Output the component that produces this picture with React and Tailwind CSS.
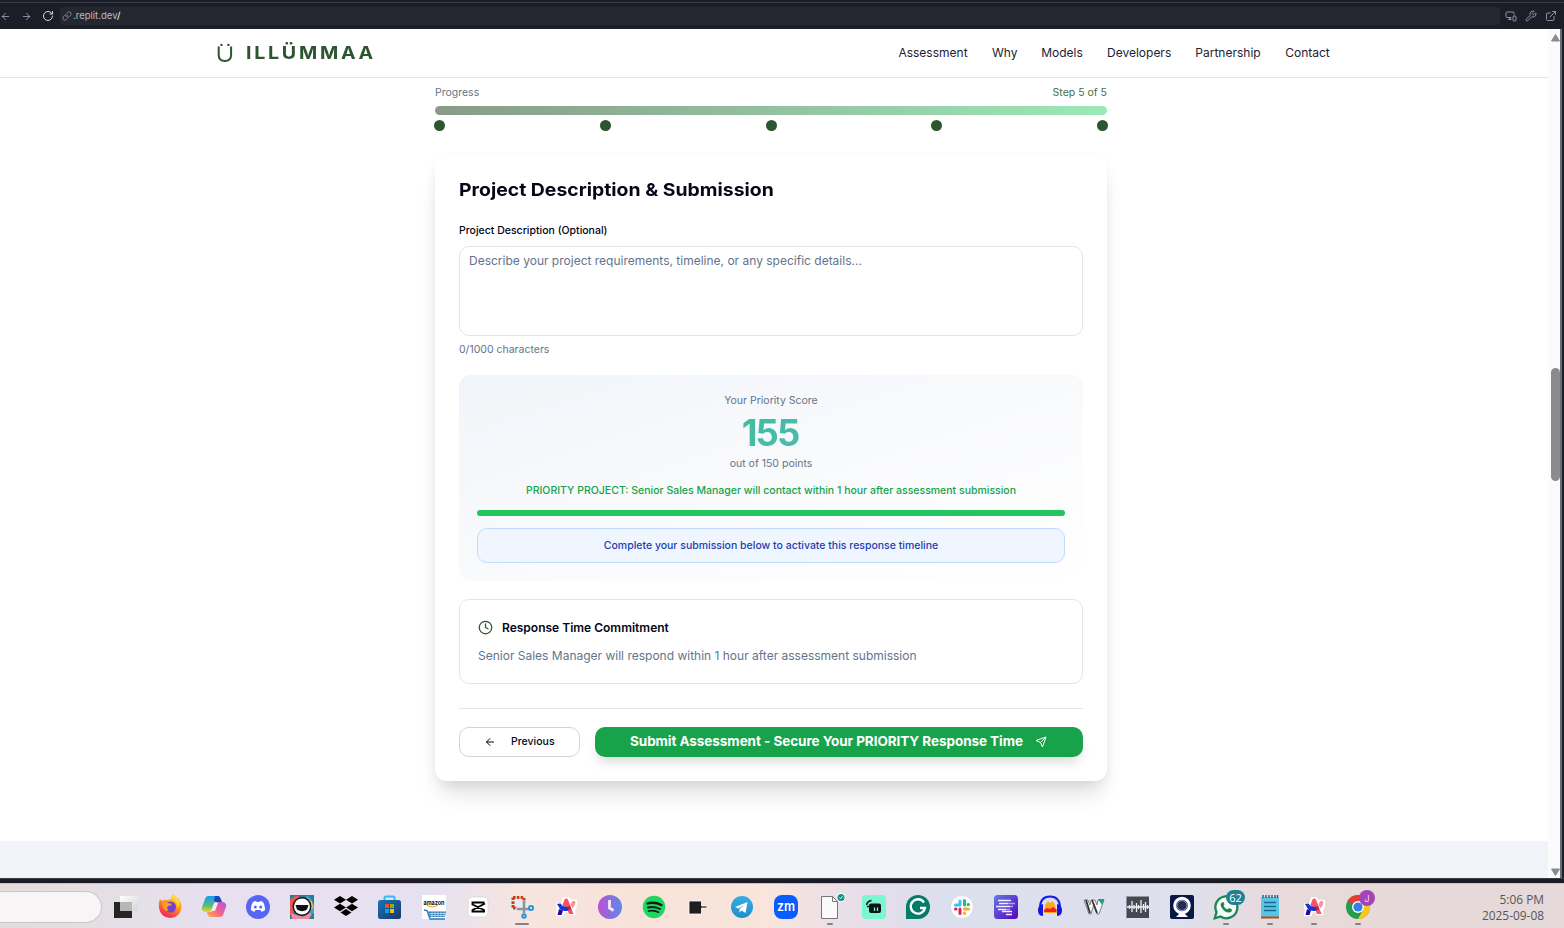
import React from "react";
import { ArrowLeft, ArrowRight, RotateCw, Link, MonitorSmartphone, Wrench, ExternalLink, Clock } from "lucide-react";

const NAV = [
  ["Assessment", "w-[70px]"],
  ["Why", "w-[25px]"],
  ["Models", "w-[42px]"],
  ["Developers", "w-[64px]"],
  ["Partnership", "w-[66px]"],
  ["Contact", "w-[45px]"],
];

function BrowserBar() {
  return (
    <div className="flex h-[29px] flex-col bg-[#1b1d27] pt-[2px]">
      <div className="h-px shrink-0 bg-[#393b49]" />
      <div className="flex h-[26px] items-center pr-[7px] text-[#a4a6b0]">
        <ArrowLeft size={11} strokeWidth={1.8} className="shrink-0" />
        <ArrowRight size={11} strokeWidth={1.8} className="ml-[10px] shrink-0" />
        <RotateCw size={12} strokeWidth={2} className="ml-[10px] shrink-0 text-[#d5d6dc]" />
        <div className="ml-[6px] flex h-[18px] flex-1 items-center rounded-[3px] bg-[#242730] pl-[2px]">
          <Link size={10} strokeWidth={1.7} />
          <span className="ml-[1px] text-[9.5px] leading-none text-[#b9bac2]">
            .replit.dev<span className="text-white">/</span>
          </span>
        </div>
        <div className="ml-[5px] flex items-center gap-[8px] text-[#9698a2]">
          <MonitorSmartphone size={12} strokeWidth={1.9} />
          <Wrench size={12} strokeWidth={1.9} />
          <ExternalLink size={12} strokeWidth={1.9} />
        </div>
      </div>
    </div>
  );
}

function Header() {
  return (
    <header className="flex h-[49px] items-center border-b border-[#e2e4ef] pl-[217px] pr-[218px]">
      <div className="flex items-center text-[#2d5530]">
        <svg width="16" height="20" viewBox="0 0 16 20" fill="none" stroke="currentColor" strokeWidth="2">
          <path d="M1.700 3.600v8.200c0 4 2.600 6.200 6.200 6.200s6.200-2.200 6.200-6.200V3.600" />
          <circle cx="4.500" cy="1.900" r="1.200" fill="currentColor" stroke="none" />
          <circle cx="11.400" cy="1.900" r="1.200" fill="currentColor" stroke="none" />
        </svg>
        <span className="ml-[13px] inline-block origin-left scale-x-[1.090] whitespace-nowrap text-[18px] font-bold leading-none tracking-[2.500px]">ILLÜMMAA</span>
      </div>
      <nav className="ml-auto flex gap-[24px] text-[12px] text-[#1d2136]">
        {NAV.map(([label, width]) => (
          <a key={label} className={width + " whitespace-nowrap text-center"}>{label}</a>
        ))}
      </nav>
    </header>
  );
}

function Progress() {
  return (
    <div className="pt-[7px]">
      <div className="flex h-[15px] items-center justify-between text-[10.5px]">
        <span className="text-[#64748b]">Progress</span>
        <span className="text-[#4b6b4d]">Step 5 of 5</span>
      </div>
      <div className="mt-[6px] h-[9px] rounded-full bg-linear-to-r from-[#889b88] to-[#9be9b8]" />
      <div className="-mx-px mt-[5px] flex justify-between">
        {[1, 2, 3, 4, 5].map((n) => (
          <div key={n} className="size-[11px] rounded-full bg-[#2d5530]" />
        ))}
      </div>
    </div>
  );
}

function ScorePanel() {
  return (
    <section className="mt-[18px] flex h-[206px] flex-col items-center rounded-[12px] bg-linear-to-br from-[#f1f5f9] via-[#f9fafc] to-white px-[18px] text-[10.5px]">
      <div className="mt-[18px] h-[15px] leading-[15px] text-[#64748b]">Your Priority Score</div>
      <div className="mt-[6px] h-[36px] bg-linear-to-br from-[#3fbd98] to-[#4dbab4] bg-clip-text pr-[2px] text-[36.5px] font-bold leading-[38px] tracking-[-1.900px] text-transparent">155</div>
      <div className="mt-[6px] h-[15px] leading-[15px] text-[#64748b]">out of 150 points</div>
      <div className="mt-[12px] h-[15px] whitespace-nowrap font-medium leading-[15px] text-[#16a34a]">
        PRIORITY PROJECT: Senior Sales Manager will contact within 1 hour after assessment submission
      </div>
      <div className="mt-[12px] h-[6px] w-full rounded-full bg-[#22c55e]" />
      <div className="mt-[12px] flex h-[35px] w-full items-center justify-center rounded-[10px] border border-[#bfdbfe] bg-[#eff6ff] font-medium text-[#1e40af]">
        Complete your submission below to activate this response timeline
      </div>
    </section>
  );
}

function FormCard() {
  return (
    <main className="mt-[25px] flex h-[625px] flex-col rounded-[12px] bg-white px-[24px] shadow-[0_18px_22px_-6px_rgba(0,0,0,0.13),0_4px_12px_0px_rgba(0,0,0,0.055)]">
      <h1 className="mt-[22px] h-[24px] origin-left scale-x-[1.078] self-start whitespace-nowrap text-[18px] font-bold leading-[24px] text-[#020617]">Project Description &amp; Submission</h1>
      <label className="mt-[21px] text-[10.5px] font-medium leading-[15px] text-[#020617]">Project Description (Optional)</label>
      <div className="mt-[8px] h-[90px] rounded-[10px] border border-[#e2e5ef] px-[9px] pt-[5px] text-[12px] leading-[18px] text-[#64748b]">
        Describe your project requirements, timeline, or any specific details...
      </div>
      <div className="mt-[6px] h-[15px] text-[10.5px] leading-[15px] text-[#64748b]">0/1000 characters</div>
      <ScorePanel />
      <section className="mt-[18px] h-[85px] rounded-[10px] border border-[#e2e5ef] px-[18px] pt-[18px]">
        <div className="flex h-[19px] items-center text-[12px] font-semibold text-[#020617]">
          <Clock size={15} strokeWidth={2} className="mr-[9px] text-[#2d5530]" />
          Response Time Commitment
        </div>
        <p className="mt-[10px] text-[12px] leading-[18px] text-[#64748b]">Senior Sales Manager will respond within 1 hour after assessment submission</p>
      </section>
      <div className="mt-[24px] flex gap-[15px] border-t border-[#e1e7ee] pt-[18px]">
        <button className="flex h-[30px] w-[121px] items-center rounded-[10px] border border-[#d1d5db] pl-[24px] text-[10.5px] font-medium text-[#020617]">
          <ArrowLeft size={12} strokeWidth={2} className="mr-[15px]" />
          Previous
        </button>
        <button className="flex h-[30px] flex-1 items-center whitespace-nowrap rounded-[10px] bg-[#17a34a] pl-[35px] text-[13.5px] font-bold text-white shadow-[0_8px_12px_-3px_rgba(0,0,0,0.14)]">
          <span className="w-[393px] pb-[2px] text-left tracking-[-0.055px]">Submit Assessment - Secure Your PRIORITY Response Time</span>
          <svg className="ml-[12px]" width="12" height="12" viewBox="0 0 24 24" fill="none" stroke="currentColor" strokeWidth="2" strokeLinejoin="round">
            <path d="m22 2-7 20-4-9-9-4Z M22 2 11 13" />
          </svg>
        </button>
      </div>
    </main>
  );
}

function ScrollTrack() {
  return (
    <div className="flex w-[16px] shrink-0 border-r-[2px] border-[#1b1d27] bg-[#fbfbfb]">
      <div className="flex flex-1 flex-col items-end">
        <svg className="mt-[5px]" width="9" height="8" viewBox="0 0 9 8"><path d="M4.500 .5 8.500 7H.5Z" fill="#8b8b8b" stroke="#8b8b8b" strokeLinejoin="round" /></svg>
        <div className="mt-[326px] h-[113px] w-[9px] rounded-full bg-[#8b8b8b]" />
        <svg className="mb-[2px] mt-auto" width="9" height="8" viewBox="0 0 9 8"><path d="M4.500 7.500 8.500 1H.5Z" fill="#8b8b8b" stroke="#8b8b8b" strokeLinejoin="round" /></svg>
      </div>
      <div className="w-[2px] bg-[#696b75]" />
    </div>
  );
}

function ArcMark() {
  return (
    <g strokeLinejoin="round">
      <path d="M13 21.500h5l2-6h4.500l2 4 1-1.500h4.500l-.5 6-2 3 1 4h-5l-1-3h-4.500l-1.500 4h-5.500l1-5Z" fill="#fff" stroke="#fff" strokeWidth="2.500" />
      <path d="m18.500 22 2-5.500q1.500-2 3.500 0L29.500 31h-4.500l-2-5-3 1Z" fill="#fb5265" />
      <path d="M26.500 21.500 28 18.500q2-1.500 3.500.5 0 3.500-3 6.500Z" fill="#ff8f98" />
      <path d="m13 21 3.500-.5 2.500 3 4.500.5 1 3.500q-5 1.500-8.500-1.500Z" fill="#0a36dc" />
      <path d="m15 26 4 1.500-1.500 4.500h-4Z" fill="#250a9c" />
      <path d="m23 23.500 3-.5 1 3.500-2.500 1Z" fill="#b8244f" />
    </g>
  );
}

const ICONS = [
  <g>
    <defs>
      <linearGradient id="tv" x1="0" y1="0" x2="1" y2="1"><stop stopColor="#fff" /><stop offset="1" stopColor="#d5d5d5" /></linearGradient>
    </defs>
    <path d="M10 19h18v16H10z" fill="#252523" />
    <path d="M16 13h17.500v15H16z" fill="url(#tv)" />
    <path d="M16 19h12v9H16z" fill="#b7b7b7" />
  </g>,
  <g>
    <defs>
      <linearGradient id="ff" x1=".8" y1="0" x2=".3" y2="1"><stop stopColor="#ffe83c" /><stop offset=".5" stopColor="#ff8a22" /><stop offset="1" stopColor="#f1185c" /></linearGradient>
    </defs>
    <path d="M12 16l2 2q2-2 5-1l4-1q0-4 3-5 1 3 4 4 4 4 3.500 9.500A11.300 11.300 0 0 1 11 25q-1-5 1-9Z" fill="url(#ff)" />
    <circle cx="22.500" cy="24" r="5.500" fill="#7141cf" />
    <path d="M14 20q3-3 6 0l4 1q-1 2-4 2-2 3 1 5-6 1-7-8Z" fill="#ff9b27" />
    <path d="M23 15q7 3 6 10 4-3 1-9l-4-4Z" fill="#ffd936" />
  </g>,
  <g>
    <defs>
      <linearGradient id="cp1" x1="0" y1="0" x2="0" y2="1"><stop stopColor="#139df0" /><stop offset=".6" stopColor="#56bd80" /><stop offset="1" stopColor="#f6d21e" /></linearGradient>
      <linearGradient id="cp2" x1="1" y1="0" x2="0" y2="1"><stop stopColor="#a85ae9" /><stop offset=".5" stopColor="#f2608d" /><stop offset="1" stopColor="#ffaf49" /></linearGradient>
    </defs>
    <path d="M16 13h10q2 0 3 4l1 2h-7l-3 8q-1 2-3 2h-4q-4-1-3-5l3-8q1-3 3-3Z" fill="url(#cp1)" />
    <path d="M23 13h3q2 0 3 4l1 2h-6l-2-1Z" fill="#1846b8" />
    <path d="M28 34H18q-2 0-3-5h4q2 0 3-3l2-6q1-1 3-1h4q4 1 3 5l-3 8q-1 2-3 2Z" fill="url(#cp2)" />
    <path d="M22 20h4l-3 8h-4Z" fill="#fae9ee" />
  </g>,
  <g>
    <circle cx="22" cy="24" r="12" fill="#5865f2" />
    <path d="M17 19q2-1 3-1l.7 1h2.600l.7-1q1 0 3 1 2.500 4 2 8-2 1.600-3.500 1.700l-1-1.700h-5l-1 1.700Q17 28.500 15 27q-.5-4 2-8Z" fill="#fff" />
    <circle cx="19.300" cy="24" r="1.500" fill="#5865f2" /><circle cx="24.700" cy="24" r="1.500" fill="#5865f2" />
  </g>,
  <g>
    <path d="M10 12h24v24H10z" fill="#257f91" />
    <path d="M10 17q5-5 9-4l-6 18-3 1Z" fill="#e85656" /><path d="M26 12q5 2 8 10v9l-5-2Z" fill="#4aa0dd" />
    <path d="M30 17q3 2 3 8l-3 2Z" fill="#f4c94a" /><path d="m11 30 6 2q8 4 12-3l3 2-3 5H12Z" fill="#f28c9c" />
    <circle cx="22" cy="23.500" r="9.500" fill="#151515" /><circle cx="22" cy="23.500" r="8" fill="#fff" />
    <path d="M15.500 22h13l-1.500 4.500q-5 3.500-10 0Z" fill="#111" />
  </g>,
  <g fill="#000">
    <path d="m16 13 6 3.800-6 3.800-6-3.800ZM28 13l6 3.800-6 3.800-6-3.800ZM16 20.700l6 3.800-6 3.800-6-3.800ZM28 20.700l6 3.800-6 3.800-6-3.800ZM22 26l5.500 3.500L22 33l-5.500-3.500Z" />
  </g>,
  <g>
    <defs><linearGradient id="ms" x1="0" y1="0" x2="1" y2="1"><stop stopColor="#1575b8" /><stop offset="1" stopColor="#1c376b" /></linearGradient></defs>
    <path d="M16.500 18v-3q0-1.500 1.500-1.500h7q1.500 0 1.500 1.500v3" fill="none" stroke="#35b9ee" strokeWidth="2" />
    <rect x="10" y="17" width="23" height="19" rx="2.500" fill="url(#ms)" />
    <path d="M17 21h4v4h-4z" fill="#f25022" /><path d="M22 21h4v4h-4z" fill="#7fba00" /><path d="M17 26h4v4h-4z" fill="#00a4ef" /><path d="M22 26h4v4h-4z" fill="#ffb900" />
  </g>,
  <g>
    <path d="M10 12h24v24H10z" fill="#fff" />
    <text x="22" y="21.500" fontSize="6.500" fontWeight="700" textAnchor="middle" textLength="21" lengthAdjust="spacingAndGlyphs" fill="#111">amazon</text>
    <path d="M15 22.500q6 3 11-.5" stroke="#f59a23" fill="none" />
    <path d="m12 27 3 .5 3 8.500h15" stroke="#2879ae" strokeWidth="1.300" fill="none" />
    <path d="M16 28.500h18l-1 5.500H18Z" fill="#2879ae" />
    <path d="M17 30.500h17M18 32.500h16M20 28.500v6M23 28.500v6M26 28.500v6M29 28.500v6M32 28.500v6" stroke="#d9eaf5" strokeWidth=".7" />
  </g>,
  <g>
    <rect x="12" y="14" width="20" height="20" rx="4" fill="#fff" stroke="#ccc" strokeWidth=".6" />
    <path d="M27.500 21v-1.500H16.500v2L28 27v1.500H16.500V27L29 20.500" fill="none" stroke="#000" strokeWidth="1.900" />
  </g>,
  <g>
    <path d="M10 12h17v17H10z" fill="#e9ebed" />
    <path d="M13 14.500h11.500M13 14.500V25M13 25h4M24 15v4" stroke="#d03c13" strokeWidth="3" strokeDasharray="2.600 1.200" fill="none" />
    <path d="M24 18v12M17 26h12" stroke="#8b959f" strokeWidth="2.500" />
    <circle cx="31" cy="25" r="2" fill="#fff" stroke="#1d94dc" strokeWidth="2" /><circle cx="24" cy="33" r="1.700" fill="#fff" stroke="#1d94dc" strokeWidth="2" />
  </g>,
  <ArcMark />,
  <g>
    <defs><linearGradient id="ck" x1="0" y1="0" x2="1" y2="0"><stop stopColor="#bd4fd2" /><stop offset="1" stopColor="#5a8ce8" /></linearGradient></defs>
    <circle cx="22" cy="24" r="12" fill="url(#ck)" /><path d="M21.500 17v8l4 2.500" fill="none" stroke="#f4e8f8" strokeWidth="2.800" />
  </g>,
  <g>
    <circle cx="22" cy="24" r="11.200" fill="#1ed760" />
    <g fill="none" stroke="#121d18" strokeLinecap="round"><path d="M15.500 20.500q7-2 14 1.500" strokeWidth="2.300" /><path d="M16 24.500q6-1.500 12 1.500" strokeWidth="1.900" /><path d="M16.500 28q6-1.200 10 1.300" strokeWidth="1.600" /></g>
  </g>,
  <g><path d="M13 18h12.500v5H31v2h-5.500v6H13z" fill="#1e1e1e" stroke="#fff" strokeWidth=".8" /></g>,
  <g>
    <defs><linearGradient id="tg" x1="0" y1="0" x2="0" y2="1"><stop stopColor="#36ade5" /><stop offset="1" stopColor="#1f8fce" /></linearGradient></defs>
    <circle cx="22" cy="24" r="11" fill="url(#tg)" /><path d="m15 24 12.500-5-2 11-4-2.500-2 2v-3.500l5-4.500-6 4Z" fill="#fff" />
  </g>,
  <g>
    <rect x="10" y="12" width="24" height="24" rx="8" fill="#0b5cff" />
    <text x="22" y="28" fontSize="13" fontWeight="600" textAnchor="middle" textLength="18" lengthAdjust="spacingAndGlyphs" fill="#fff">zm</text>
  </g>,
  <g>
    <path d="M13.500 13.500h11l5 5v17h-16Z" fill="#fafafa" stroke="#777" /><path d="M24.500 13.500v5h5" fill="none" stroke="#777" />
    <circle cx="33" cy="14.500" r="4.500" fill="#fff" /><circle cx="33" cy="14.500" r="3.500" fill="#0f9488" /><path d="m31.500 14.500 1 1.200 2-2.300" stroke="#fff" fill="none" />
  </g>,
  <g>
    <rect x="10" y="12" width="24" height="24" rx="4" fill="#7af6d0" />
    <rect x="17" y="20.500" width="12" height="9.500" rx="2" fill="#0d1216" /><path d="M22.500 24.500v3.500M25.500 24.500v3.500" stroke="#7af6d0" strokeWidth="1.300" />
    <path d="M14.500 22q1-4 5-4.500M15 23.500h3" fill="none" stroke="#0d1216" strokeWidth="1.400" />
  </g>,
  <g>
    <path d="M22 12a12 12 0 1 1 0 24H10V24a12 12 0 0 1 12-12Z" fill="#047c69" />
    <path d="M28 19.500A7.200 7.200 0 1 0 29 25h-5" fill="none" stroke="#fff" strokeWidth="2.300" />
  </g>,
  <g>
    <circle cx="22" cy="24" r="11.500" fill="#fff" stroke="#ccc" strokeWidth=".6" />
    <g strokeWidth="3" strokeLinecap="round" fill="none"><path d="M20 18v4M15.500 22H20" stroke="#36c5f0" /><path d="M24.500 17.500V22M28 21.500h.5" stroke="#2eb67d" /><path d="M24.500 30.500V30M24.500 26h4" stroke="#ecb22e" /><path d="M20 30.500V26M15.500 26h.5" stroke="#e01e5a" /></g>
  </g>,
  <g>
    <defs><linearGradient id="vl" x1="0" y1="0" x2="1" y2="1"><stop stopColor="#6379e9" /><stop offset="1" stopColor="#5505bb" /></linearGradient></defs>
    <rect x="10" y="12" width="24" height="24" rx="3.500" fill="url(#vl)" />
    <path d="M14 17.500h13M15 20.500h9M12 23.500h14M14 26.500h8M18 28.500h10M22 31.500h6" stroke="#f3f0ff" strokeWidth="1.700" />
    <path d="M24 20.500h7M26 23.500h3M22 26.500h4" stroke="#b9a5ec" strokeWidth="1.700" />
  </g>,
  <g>
    <path d="m16 30 1-8 3-4 2 2 3-2 2 4 2 8Z" fill="#ffa61d" /><path d="m16 27 3-2 3 1 3-2 4 3-1 2H16Z" fill="#ee2515" />
    <path d="M12 25q0-11.500 10-11.500t10 11.500" fill="none" stroke="#1b1eea" strokeWidth="2" />
    <path d="M15 21v12q-5.500-.5-5-6.500.5-4.500 5-5.500ZM29 21v12q5.500-.5 5-6.500-.5-4.500-5-5.500Z" fill="#1118e0" />
  </g>,
  <g>
    <path d="m12 17 5 14h2l3-10 3 10h2l5-14h-6l-1 5-2-5h-4l-1 5-2-5Z" fill="#f9f9f9" stroke="#666" strokeWidth=".8" />
    <path d="m14 17 4 13M20 17l5 13" stroke="#333" strokeWidth="1.800" /><path d="M26 16h6l-2 6Z" fill="#16a28b" />
  </g>,
  <g>
    <path d="M10.500 13h22.500v23H10.500z" fill="#454855" /><path d="M10.500 13h22.500M10.500 35.500h22.500" stroke="#e3e3e3" />
    <path d="M11 24h22M13.500 22v4M16 18v11M18 22v4M20.500 20v9M22.500 22v4M25 17v13M27.500 21v6M29.500 19v10M31.500 22v4" stroke="#f2f2f2" strokeWidth="1.300" />
  </g>,
  <g>
    <rect x="10" y="12" width="24" height="24" rx="2" fill="#081743" />
    <circle cx="22" cy="22.500" r="7.300" fill="none" stroke="#fff" strokeWidth="3" /><circle cx="22" cy="22.500" r="5" fill="#202d59" stroke="#b7bfd9" strokeWidth=".8" /><path d="m16 34 3-3h6l3 3Z" fill="#fff" />
  </g>,
  <g>
    <path d="M10.800 35.300 12.500 29a11 11 0 1 1 4 4.500Z" fill="#f6faf7" stroke="#198754" strokeWidth="2.300" />
    <path d="M18 19.500q-2 1-1 4 3 6 8 6 3 0 3-3l-3-1.500-1.500 1.500q-3-1-4-4l1-1-1-2.500Z" fill="#198754" />
    <rect x="22" y="7" width="19" height="15" rx="7.500" fill="#23818e" />
    <text x="31.500" y="18.500" fontSize="11" textAnchor="middle" fill="#fff" fontFamily="Open Sans">62</text>
  </g>,
  <g>
    <rect x="13" y="14" width="18" height="20" rx="1" fill="#58c5e7" /><path d="M13 33.500h18v2H13z" fill="#b34e14" />
    <path d="M15 12v3M18 12v3M21 12v3M24 12v3M27 12v3M29.500 12v3" stroke="#16596f" strokeWidth="1.300" />
    <path d="M16 19.500h12M16 23.500h12M16 27.500h12" stroke="#166c8a" strokeWidth="1.500" />
  </g>,
  <ArcMark />,
  <g>
    <circle cx="22" cy="24" r="12" fill="#249d4c" />
    <path d="M22 24 11.600 18A12 12 0 0 1 32.400 18L22 24Z" fill="#e63c32" /><path d="M22 18h10.400A12 12 0 0 1 22 36l5-9Z" fill="#fbc719" />
    <circle cx="22" cy="24" r="6" fill="#fff" /><circle cx="22" cy="24" r="4.600" fill="#327fe8" />
    <circle cx="31" cy="15" r="8" fill="#a544b7" /><text x="31" y="18.500" fontSize="9.500" textAnchor="middle" fill="#ecd5ef">J</text>
  </g>,
];

const RUNNING = { 9: 14, 16: 6, 25: 6, 26: 6, 27: 6, 28: 6 };

function Taskbar() {
  return (
    <footer className="flex h-[45px] border-t border-[#c4c1c8] bg-[linear-gradient(90deg,#e2dcda_0px,#e5dfe5_110px,#e6e0f0_220px,#e6e1f2_430px,#f6e5df_520px,#f9e2d9_640px,#f8e5dc_770px,#e7deea_860px,#dcdfed_940px,#dee0ec_1180px,#e9d9da_1290px,#e6d9d9_1564px)]">
      <div className="mt-[7px] h-[32px] w-[102px] rounded-r-full border border-l-0 border-[#c9c6c8] bg-[#f7f5f5]" />
      <div className="-mt-px flex">
        {ICONS.map((icon, i) => (
          <svg key={i} className={i === 0 ? "w-[46px] overflow-visible" : "w-[44px] overflow-visible"} height="45" viewBox={i === 0 ? "-0.5 0 46 45" : "0 0 44 45"}>
            {i === 0 ? <g transform="translate(1.5 0)">{icon}</g> : icon}
            {RUNNING[i] && <rect x={22 - RUNNING[i] / 2} y="40" width={RUNNING[i]} height="2" rx="1" fill="#85818a" />}
          </svg>
        ))}
      </div>
      <div className="ml-auto mr-[20px] mt-[7px] whitespace-nowrap text-right font-['Open_Sans','Noto_Sans',sans-serif] text-[11.900px] leading-[16px] text-[#565458]">
        <div>5:06 PM</div>
        <div>2025-09-08</div>
      </div>
    </footer>
  );
}

export default function App() {
  return (
    <div className="flex h-[928px] w-[1564px] flex-col overflow-hidden bg-white font-['Inter',sans-serif]">
      <BrowserBar />
      <div className="flex h-[849px]">
        <div className="flex w-[1548px] flex-col bg-white">
          <Header />
          <div className="ml-[435px] h-[763px] w-[672px]">
            <Progress />
            <FormCard />
          </div>
          <div className="flex-1 bg-[#f0f3f8]" />
        </div>
        <ScrollTrack />
      </div>
      <div className="h-[5px] border-t border-[#3a3c49] bg-[#1a1b26]" />
      <Taskbar />
    </div>
  );
}
